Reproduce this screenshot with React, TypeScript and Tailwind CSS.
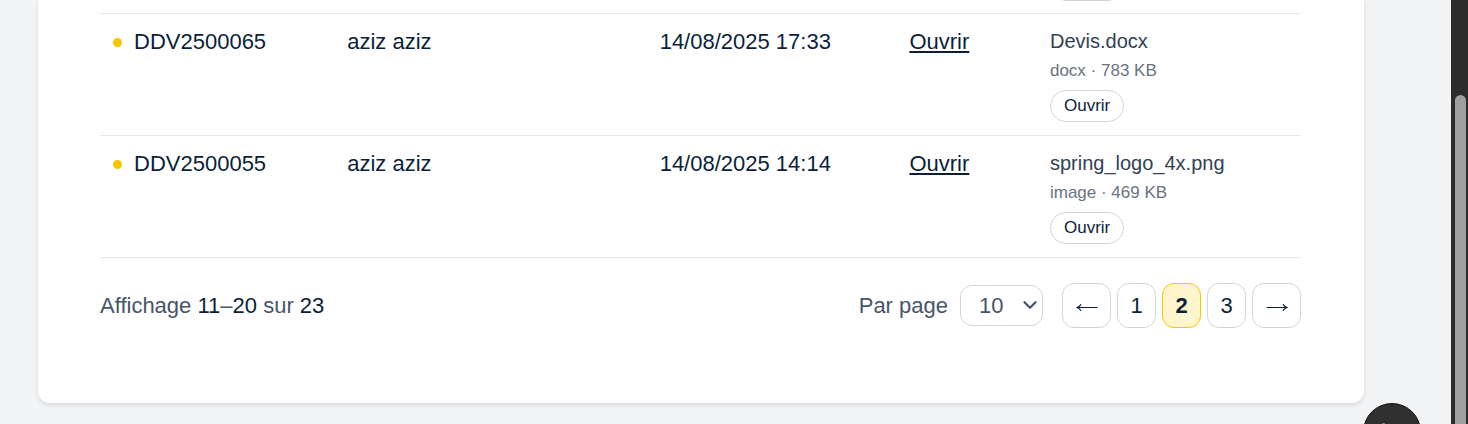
import React, { useState } from "react";
import { ChevronDown } from "lucide-react";

type Demande = {
  reference: string;
  client: string;
  date: string;
  fileName: string;
  fileInfo: string;
};

const demandes: Demande[] = [
  { reference: "DDV2500065", client: "aziz aziz", date: "14/08/2025 17:33", fileName: "Devis.docx", fileInfo: "docx · 783 KB" },
  { reference: "DDV2500055", client: "aziz aziz", date: "14/08/2025 14:14", fileName: "spring_logo_4x.png", fileInfo: "image · 469 KB" },
];

function DemandeRow({ item }: { item: Demande }) {
  return (
    <tr className="border-b border-[#e5e7eb] align-top">
      <td className="px-[13px] pt-3.5 pb-3">
        <div className="flex items-center gap-3">
          <span className="size-[9px] shrink-0 rounded-full bg-[#f7c600]" />
          <span>{item.reference}</span>
        </div>
      </td>
      <td className="px-[13px] pt-3.5 pb-3">{item.client}</td>
      <td className="px-3 pt-3.5 pb-3 whitespace-nowrap">{item.date}</td>
      <td className="px-3 pt-3.5 pb-3">
        <a href="#pdf" className="underline decoration-2 underline-offset-2">Ouvrir</a>
      </td>
      <td className="px-3 py-[13px]">
        <div className="text-[20px] leading-7 text-[#334155]">{item.fileName}</div>
        <div className="mt-1 text-[17px] leading-6 text-[#6b7280]">{item.fileInfo}</div>
        <button type="button" className="mt-[7px] flex h-8 items-center rounded-full border border-[#d1d5db] px-[13px] text-[17px]">
          Ouvrir
        </button>
      </td>
    </tr>
  );
}

function Arrow({ direction }: { direction: "left" | "right" }) {
  return (
    <svg viewBox="0 0 22 9" className="mt-[3px] h-[9px] w-[22px]" fill="none" stroke="currentColor" strokeWidth="1.2" aria-hidden="true">
      {direction === "left" ? <path d="M21.5 4.500H2M5 1.200Q3.800 3.600 1.200 4.500Q3.800 5.400 5 7.800" /> : <path d="M.5 4.500H20M17 1.200Q18.200 3.600 20.800 4.500Q18.200 5.400 17 7.800" />}
    </svg>
  );
}

function Pagination() {
  const [page, setPage] = useState(2);
  const base = "flex h-[45px] items-center justify-center rounded-xl border";
  const idle = "border-[#d1d5db] bg-white";
  const active = "border-[#f7c600] bg-[#fff5cc] font-bold";
  return (
    <nav aria-label="Pagination" className="flex gap-1.5">
      <button type="button" aria-label="Page précédente" onClick={() => setPage(Math.max(1, page - 1))} className={`${base} ${idle} w-[49px]`}>
        <Arrow direction="left" />
      </button>
      {[1, 2, 3].map((n) => (
        <button key={n} type="button" onClick={() => setPage(n)} className={`${base} ${n === page ? active : idle} w-[39px]`}>
          {n}
        </button>
      ))}
      <button type="button" aria-label="Page suivante" onClick={() => setPage(Math.min(3, page + 1))} className={`${base} ${idle} w-[49px]`}>
        <Arrow direction="right" />
      </button>
    </nav>
  );
}

export default function App() {
  return (
    <div className="flex h-screen overflow-hidden bg-[#f3f4f6] font-['Liberation_Sans',Arial,sans-serif] text-[22px] leading-7 text-[#0b1f3a]">
      <main className="relative min-w-0 flex-1 pr-[87px] pl-[38px]">
        <section className="rounded-b-xl bg-white pr-[63px] pb-[75px] pl-[62px] shadow-[0_2px_4px_rgba(0,0,0,0.12)]">
          <table className="w-full table-fixed border-collapse text-left">
            <colgroup>
              <col className="w-[19.5%]" />
              <col className="w-[26.1%]" />
              <col className="w-[20.8%]" />
              <col className="w-[11.7%]" />
              <col />
            </colgroup>
            <tbody>
              <tr className="border-b border-[#e5e7eb]">
                <td colSpan={4} />
                <td className="px-3 pb-3">
                  <div className="flex h-px items-end overflow-hidden">
                    <span className="h-8 w-[74px] shrink-0 rounded-full border border-[#d1d5db]" />
                  </div>
                </td>
              </tr>
              {demandes.map((item) => (
                <DemandeRow key={item.reference} item={item} />
              ))}
            </tbody>
          </table>
          <div className="mt-[25px] flex items-center justify-between">
            <p className="text-[#475569]">
              Affichage <span className="text-[#0b1f3a]">11</span>–<span className="text-[#0b1f3a]">20</span> sur <span className="text-[#0b1f3a]">23</span>
            </p>
            <div className="flex items-center gap-[19px]">
              <div className="flex items-center gap-3 text-[#475569]">
                <label htmlFor="per-page">Par page</label>
                <div className="relative">
                  <select id="per-page" defaultValue="10" className="h-[41px] w-[83px] appearance-none rounded-xl border border-[#d1d5db] bg-white pl-[18px]">
                    <option>10</option>
                    <option>20</option>
                    <option>50</option>
                  </select>
                  <ChevronDown className="pointer-events-none absolute top-[9px] right-0.5 size-[22px]" strokeWidth={2.5} />
                </div>
              </div>
              <Pagination />
            </div>
          </div>
        </section>
        <button type="button" aria-label="Assistant" className="absolute -bottom-[37px] right-[30px] flex size-[58px] justify-center rounded-full border border-[#111] bg-[#303030] shadow-lg">
          <svg viewBox="0 0 28 28" className="mt-[18px] size-7" fill="none" stroke="#777" strokeWidth="1">
            <path d="M4 1.500h3M3 2.500h5M19 2.500h4" />
          </svg>
        </button>
      </main>
      <div className="w-[17px] shrink-0 bg-[#2c2c2c] pt-[95px] pr-0.5 pl-1" aria-hidden="true">
        <div className="h-full rounded-t-full bg-[#9f9f9f]" />
      </div>
    </div>
  );
}
